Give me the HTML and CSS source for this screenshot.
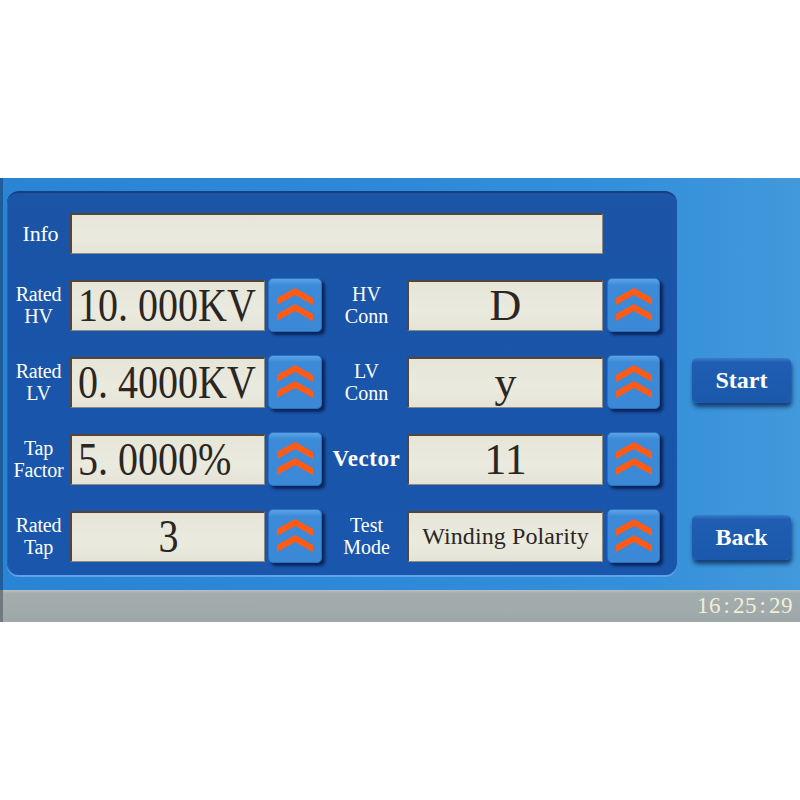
FILE: index.html
```html
<!DOCTYPE html>
<html>
<head>
<meta charset="utf-8">
<link rel="stylesheet" href="styles.css">
</head>
<body>
<div class="top-space"></div>
<div class="screen">
  <div class="panel">
    <div class="info-row">
      <div class="lbl info-lbl">Info</div>
      <div class="field info-field"></div>
    </div>
    <div class="row">
      <div class="lbl">Rated<br>HV</div>
      <div class="field"><span class="num">10. 000KV</span></div>
      <div class="up"><svg viewBox="0 0 36 34" width="36" height="34"><polygon points="0,10 18,0 36,10 36,17 18,7 0,17"/><polygon points="0,26 18,16 36,26 36,33 18,23 0,33"/></svg></div>
      <div class="lbl2">HV<br>Conn</div>
      <div class="field right-field"><span class="times">D</span></div>
      <div class="up up-r"><svg viewBox="0 0 36 34" width="36" height="34"><polygon points="0,10 18,0 36,10 36,17 18,7 0,17"/><polygon points="0,26 18,16 36,26 36,33 18,23 0,33"/></svg></div>
    </div>
    <div class="row">
      <div class="lbl">Rated<br>LV</div>
      <div class="field"><span class="num">0. 4000KV</span></div>
      <div class="up"><svg viewBox="0 0 36 34" width="36" height="34"><polygon points="0,10 18,0 36,10 36,17 18,7 0,17"/><polygon points="0,26 18,16 36,26 36,33 18,23 0,33"/></svg></div>
      <div class="lbl2">LV<br>Conn</div>
      <div class="field right-field"><span class="times">y</span></div>
      <div class="up up-r"><svg viewBox="0 0 36 34" width="36" height="34"><polygon points="0,10 18,0 36,10 36,17 18,7 0,17"/><polygon points="0,26 18,16 36,26 36,33 18,23 0,33"/></svg></div>
    </div>
    <div class="row">
      <div class="lbl">Tap<br>Factor</div>
      <div class="field"><span class="num">5. 0000%</span></div>
      <div class="up"><svg viewBox="0 0 36 34" width="36" height="34"><polygon points="0,10 18,0 36,10 36,17 18,7 0,17"/><polygon points="0,26 18,16 36,26 36,33 18,23 0,33"/></svg></div>
      <div class="lbl2 vector">Vector</div>
      <div class="field right-field"><span class="times">11</span></div>
      <div class="up up-r"><svg viewBox="0 0 36 34" width="36" height="34"><polygon points="0,10 18,0 36,10 36,17 18,7 0,17"/><polygon points="0,26 18,16 36,26 36,33 18,23 0,33"/></svg></div>
    </div>
    <div class="row">
      <div class="lbl">Rated<br>Tap</div>
      <div class="field center-field"><span class="num num-c">3</span></div>
      <div class="up"><svg viewBox="0 0 36 34" width="36" height="34"><polygon points="0,10 18,0 36,10 36,17 18,7 0,17"/><polygon points="0,26 18,16 36,26 36,33 18,23 0,33"/></svg></div>
      <div class="lbl2">Test<br>Mode</div>
      <div class="field right-field"><span class="mode">Winding Polarity</span></div>
      <div class="up up-r"><svg viewBox="0 0 36 34" width="36" height="34"><polygon points="0,10 18,0 36,10 36,17 18,7 0,17"/><polygon points="0,26 18,16 36,26 36,33 18,23 0,33"/></svg></div>
    </div>
  </div>
  <div class="side">
    <div class="side-btn start">Start</div>
    <div class="side-btn back">Back</div>
  </div>
</div>
<div class="status">
  <span class="time">16<span class="colon">:</span>25<span class="colon">:</span>29</span>
</div>
</body>
</html>
```

FILE: styles.css
```css
html, body {
  margin: 0;
  padding: 0;
  background: #ffffff;
}

.top-space {
  height: 178px;
}

.screen {
  height: 412px;
  display: flex;
  align-items: flex-start;
  background: linear-gradient(90deg, #2a84d4 0%, #2e89d8 50%, #3590da 80%, #4299db 100%);
  border-left: 3px solid #1f5c9c;
  box-sizing: border-box;
}

.panel {
  margin-left: 4px;
  margin-top: 13px;
  width: 670px;
  height: 384px;
  box-sizing: border-box;
  padding: 20px 0 0 0;
  background: linear-gradient(180deg, #1c54a6 0%, #1955aa 50%, #1a56ac 100%);
  border-top: 2px solid #173e82;
  border-radius: 12px;
  box-shadow: 0 2px 0 #5ea2e8, inset 1px 0 0 #2a62b2;
  display: flex;
  flex-direction: column;
}

.info-row {
  display: flex;
  align-items: center;
  height: 41px;
  margin-bottom: 24px;
}

.row {
  display: flex;
  align-items: center;
  height: 54px;
  margin-bottom: 23px;
}

.lbl {
  width: 63px;
  flex: none;
  color: #ffffff;
  font-family: "Liberation Serif", "Times New Roman", serif;
  font-size: 20px;
  line-height: 22px;
  text-align: center;
  letter-spacing: -0.2px;
}

.info-lbl {
  font-size: 22px;
  padding-left: 4px;
  box-sizing: border-box;
}

.lbl2 {
  width: 85px;
  flex: none;
  color: #ffffff;
  font-family: "Liberation Serif", "Times New Roman", serif;
  font-size: 20px;
  line-height: 22px;
  text-align: center;
  padding-left: 4px;
  box-sizing: border-box;
}

.vector {
  font-size: 23px;
  font-weight: bold;
  letter-spacing: 0.6px;
}

.field {
  width: 195px;
  height: 51px;
  flex: none;
  box-sizing: border-box;
  background: linear-gradient(180deg, #e6e5d8 0%, #ebeadf 60%, #e4e3d6 100%);
  border-style: solid;
  border-width: 2px 1px 1px 2px;
  border-color: #574638 #8d8c82 #8d8c82 #574638;
  display: flex;
  align-items: center;
  padding-left: 6px;
  overflow: hidden;
}

.info-field {
  width: 533px;
  height: 41px;
}

.right-field {
  width: 196px;
  justify-content: center;
  padding-left: 0;
}

.center-field {
  justify-content: center;
  padding-left: 0;
}

.num {
  display: inline-block;
  font-family: "Liberation Serif", "Times New Roman", serif;
  font-size: 46px;
  line-height: 46px;
  color: #2b2622;
  white-space: pre;
  transform: scaleX(0.87);
  transform-origin: left center;
}

.num-c {
  transform-origin: center center;
}

.times {
  font-family: "Liberation Serif", "Times New Roman", serif;
  font-size: 44px;
  line-height: 46px;
  color: #2b2622;
}

.mode {
  font-family: "Liberation Serif", "Times New Roman", serif;
  font-size: 24px;
  color: #2b2622;
  letter-spacing: 0.1px;
}

.up {
  width: 54px;
  height: 54px;
  flex: none;
  margin-left: 3px;
  box-sizing: border-box;
  border-radius: 5px;
  background: linear-gradient(180deg, #5aa3e6 0%, #3d8bd8 12%, #3a88d6 100%);
  box-shadow: 3px 3px 3px rgba(5, 20, 60, 0.75);
  border: 1px solid #2c6fbf;
  display: flex;
  align-items: center;
  justify-content: center;
}

.up-r {
  width: 53px;
  margin-left: 4px;
}

.up svg polygon {
  fill: #ff5a16;
}

.side {
  margin-left: 15px;
  display: flex;
  flex-direction: column;
}

.side-btn {
  width: 99px;
  height: 45px;
  box-sizing: border-box;
  border-radius: 5px;
  background: linear-gradient(180deg, #3a7ccc 0%, #1f5eb2 10%, #1b58ac 100%);
  box-shadow: 1px 4px 4px rgba(5, 25, 70, 0.7);
  color: #ffffff;
  font-family: "Liberation Serif", "Times New Roman", serif;
  font-weight: bold;
  font-size: 24px;
  display: flex;
  align-items: center;
  justify-content: center;
}

.start {
  margin-top: 180px;
}

.back {
  margin-top: 112px;
}

.status {
  height: 32px;
  box-sizing: border-box;
  background: linear-gradient(180deg, #b8c2c2 0%, #a3adad 10%, #9ea8a8 100%);
  border-left: 3px solid #6f7a80;
  display: flex;
  align-items: center;
  justify-content: flex-end;
  padding-right: 7px;
}

.time {
  font-family: "Liberation Serif", "Times New Roman", serif;
  font-size: 23px;
  color: #f3efd6;
  letter-spacing: 0.5px;
}

.colon {
  display: inline-block;
  width: 12px;
  text-align: center;
}
```
